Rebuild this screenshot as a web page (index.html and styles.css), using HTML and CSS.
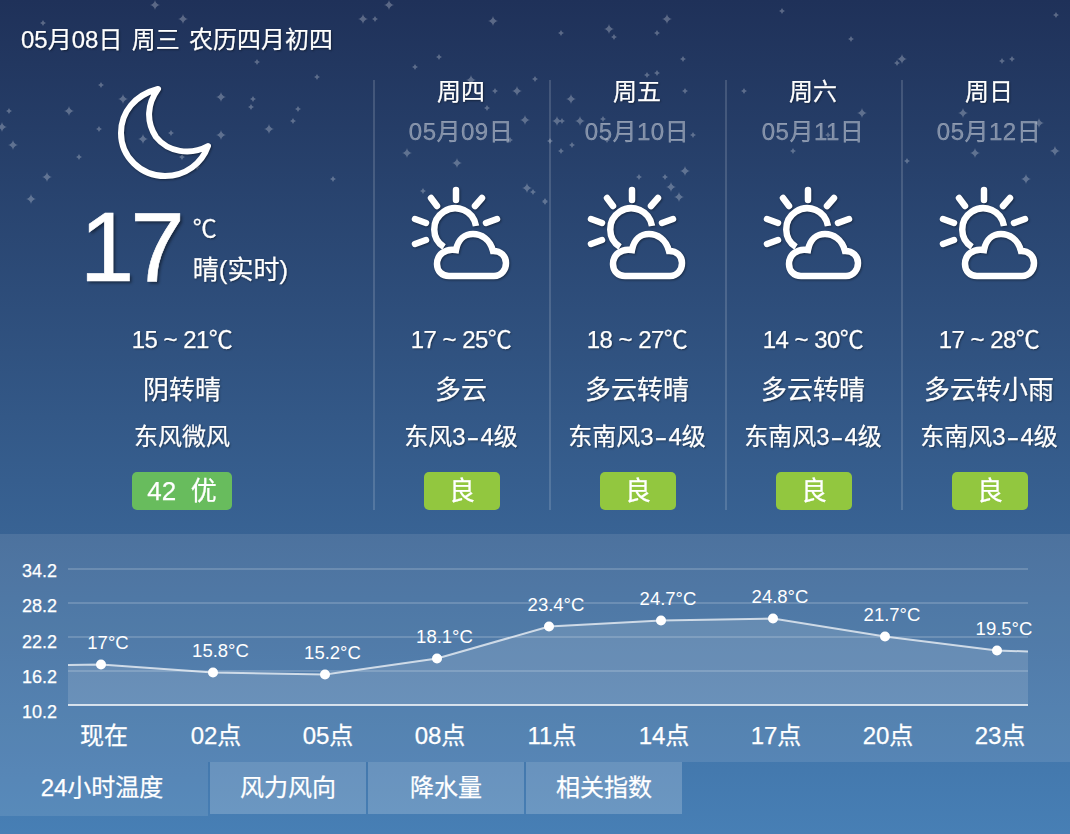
FILE: index.html
```html
<!DOCTYPE html>
<html lang="zh">
<head>
<meta charset="utf-8">
<title>天气</title>
<link rel="stylesheet" href="styles.css">
</head>
<body>
<svg class="defs" width="0" height="0" aria-hidden="true">
  <symbol id="pc" viewBox="0 0 100 100">
    <g fill="none" stroke="#fff" stroke-width="6.500" stroke-linecap="round">
      <path d="M45 5V15M20 13L26 21M71 13L64 21M4 34L15 38M86 34L75 38M4 59L15 55"/>
      <path d="M33 62A21 21 0 1 1 65 41" stroke-linecap="butt"/>
      <path d="M38 91H83C91 91 95 84 95 78 95 71 90 66 82 66 79 54 70 49 62 49 54 49 47 54 45 65 34 63 26 70 26 79 26 86 31 91 38 91Z"/>
    </g>
  </symbol>
</svg>
<div class="page">
  <svg class="stars" width="1070" height="210" aria-hidden="true">
    <defs>
      <path id="b" d="M0-5Q.8-.8 5 0Q.8.8 0 5Q-.8.8-5 0Q-.8-.8 0-5Z"/>
      <path id="t" d="M0-3Q.7-.7 3 0Q.7.7 0 3Q-.7.7-3 0Q-.7-.7 0-3Z"/>
    </defs>
    <g class="star-set">
      <use href="#b" x="155" y="5"/><use href="#b" x="183" y="19"/><use href="#t" x="43" y="23"/><use href="#t" x="257" y="62"/><use href="#t" x="317" y="77"/><use href="#t" x="101" y="85"/><use href="#b" x="123" y="99"/><use href="#b" x="221" y="97"/><use href="#t" x="253" y="99"/><use href="#t" x="251" y="107"/><use href="#t" x="298" y="109"/><use href="#t" x="293" y="121"/><use href="#b" x="269" y="129"/><use href="#b" x="69" y="111"/><use href="#t" x="9" y="111"/><use href="#b" x="2" y="127"/><use href="#t" x="99" y="129"/><use href="#b" x="13" y="145"/><use href="#t" x="79" y="157"/><use href="#b" x="47" y="177"/><use href="#b" x="31" y="199"/><use href="#b" x="143" y="139"/><use href="#t" x="171" y="133"/><use href="#b" x="221" y="135"/><use href="#t" x="333" y="179"/><use href="#t" x="182" y="157"/><use href="#t" x="197" y="167"/>
      <use href="#b" x="389" y="5"/><use href="#b" x="363" y="19"/><use href="#t" x="375" y="19"/><use href="#b" x="493" y="21"/><use href="#t" x="439" y="57"/><use href="#t" x="415" y="67"/><use href="#b" x="471" y="80"/><use href="#t" x="535" y="79"/><use href="#b" x="517" y="91"/><use href="#t" x="495" y="91"/><use href="#t" x="487" y="108"/><use href="#b" x="525" y="120"/><use href="#b" x="557" y="121"/><use href="#b" x="407" y="153"/><use href="#b" x="457" y="163"/><use href="#t" x="550" y="141"/><use href="#b" x="527" y="188"/><use href="#t" x="533" y="192"/><use href="#t" x="545" y="201"/><use href="#t" x="423" y="191"/><use href="#t" x="510" y="140"/>
      <use href="#b" x="667" y="19"/><use href="#b" x="609" y="29"/><use href="#t" x="614" y="37"/><use href="#t" x="561" y="33"/><use href="#t" x="657" y="33"/><use href="#t" x="782" y="11"/><use href="#t" x="1056" y="15"/><use href="#t" x="851" y="39"/><use href="#b" x="902" y="59"/><use href="#t" x="897" y="63"/><use href="#t" x="683" y="59"/><use href="#t" x="1012" y="59"/><use href="#t" x="1002" y="61"/><use href="#t" x="657" y="73"/><use href="#t" x="647" y="75"/><use href="#t" x="685" y="91"/><use href="#t" x="744" y="91"/><use href="#b" x="571" y="99"/><use href="#t" x="562" y="121"/><use href="#b" x="580" y="121"/><use href="#t" x="603" y="119"/><use href="#b" x="862" y="113"/><use href="#b" x="963" y="113"/><use href="#b" x="1039" y="123"/><use href="#t" x="693" y="135"/><use href="#t" x="607" y="140"/><use href="#t" x="572" y="145"/><use href="#t" x="561" y="151"/><use href="#t" x="793" y="151"/><use href="#b" x="975" y="153"/><use href="#b" x="1055" y="151"/><use href="#t" x="907" y="161"/><use href="#b" x="685" y="171"/><use href="#t" x="639" y="177"/><use href="#t" x="665" y="177"/><use href="#b" x="671" y="187"/><use href="#b" x="679" y="197"/><use href="#b" x="1026" y="179"/><use href="#t" x="828" y="135"/><use href="#t" x="545" y="202"/>
    </g>
  </svg>

  <header class="date">05月08日&nbsp;&nbsp;周三&nbsp;&nbsp;农历四月初四</header>

  <section class="forecast">
    <div class="today">
      <svg class="moon" width="100" height="100" viewBox="115 85 100 100">
        <path d="M158 89C135 95 121 112 121 133 121 157 141 176 165 176 186 176 202 163 208 146 190 156 168 152 156 137 146 122 147 104 158 89Z" fill="none" stroke="#fff" stroke-width="6" stroke-linejoin="round"/>
      </svg>
      <div class="now">
        <div class="big">17</div>
        <div class="now-side">
          <div class="unit">℃</div>
          <div class="real">晴(实时)</div>
        </div>
      </div>
      <div class="temp">15 ~ 21℃</div>
      <div class="cond">阴转晴</div>
      <div class="wind">东风微风</div>
      <div class="aqi aqi-good aqi-wide">42&nbsp;&nbsp;优</div>
    </div>

    <div class="day">
      <div class="week">周四</div>
      <div class="md">05月09日</div>
      <svg class="wx" width="100" height="100"><use href="#pc"/></svg>
      <div class="temp">17 ~ 25℃</div>
      <div class="cond">多云</div>
      <div class="wind">东风3<span class="dash">-</span>4级</div>
      <div class="aqi aqi-day">良</div>
    </div>
    <div class="day">
      <div class="week">周五</div>
      <div class="md">05月10日</div>
      <svg class="wx" width="100" height="100"><use href="#pc"/></svg>
      <div class="temp">18 ~ 27℃</div>
      <div class="cond">多云转晴</div>
      <div class="wind">东南风3<span class="dash">-</span>4级</div>
      <div class="aqi aqi-day">良</div>
    </div>
    <div class="day">
      <div class="week">周六</div>
      <div class="md">05月11日</div>
      <svg class="wx" width="100" height="100"><use href="#pc"/></svg>
      <div class="temp">14 ~ 30℃</div>
      <div class="cond">多云转晴</div>
      <div class="wind">东南风3<span class="dash">-</span>4级</div>
      <div class="aqi aqi-day">良</div>
    </div>
    <div class="day">
      <div class="week">周日</div>
      <div class="md">05月12日</div>
      <svg class="wx" width="100" height="100"><use href="#pc"/></svg>
      <div class="temp">17 ~ 28℃</div>
      <div class="cond">多云转小雨</div>
      <div class="wind">东南风3<span class="dash">-</span>4级</div>
      <div class="aqi aqi-day">良</div>
    </div>
  </section>

  <section class="chart">
    <div class="yaxis"><span>34.2</span><span>28.2</span><span>22.2</span><span>16.2</span><span>10.2</span></div>
    <svg class="plot" width="1070" height="228" viewBox="0 0 1070 228">
      <path d="M68 131L101 130.500L213 138.500L325 140.500L437 124.500L549 92.500L661 86.500L773 84.500L885 102.500L997 116.500L1028 117.500V171H68Z" fill="#fff" fill-opacity=".13"/>
      <path d="M68 35H1028M68 69H1028M68 103H1028M68 137H1028" stroke="#fff" stroke-opacity=".17" stroke-width="2"/>
      <path d="M68 171H1028" stroke="#fff" stroke-opacity=".75" stroke-width="2"/>
      <path d="M68 131L101 130.500L213 138.500L325 140.500L437 124.500L549 92.500L661 86.500L773 84.500L885 102.500L997 116.500L1028 117.500" fill="none" stroke="#fff" stroke-opacity=".7" stroke-width="2"/>
      <g fill="#fff">
        <circle cx="101" cy="130.500" r="5"/><circle cx="213" cy="138.500" r="5"/><circle cx="325" cy="140.500" r="5"/><circle cx="437" cy="124.500" r="5"/><circle cx="549" cy="92.500" r="5"/><circle cx="661" cy="86.500" r="5"/><circle cx="773" cy="84.500" r="5"/><circle cx="885" cy="102.500" r="5"/><circle cx="997" cy="116.500" r="5"/>
      </g>
      <g class="vals" text-anchor="middle">
        <text x="108" y="115">17°C</text><text x="220.500" y="123">15.8°C</text><text x="332.500" y="125">15.2°C</text><text x="444.500" y="109">18.1°C</text><text x="556" y="77">23.4°C</text><text x="668" y="71">24.7°C</text><text x="780" y="69">24.8°C</text><text x="892" y="87">21.7°C</text><text x="1004" y="101">19.5°C</text>
      </g>
    </svg>
    <div class="hours"><span>现在</span><span>02点</span><span>05点</span><span>08点</span><span>11点</span><span>14点</span><span>17点</span><span>20点</span><span>23点</span></div>
  </section>

  <nav class="tabs">
    <div class="tab tab-on">24小时温度</div>
    <div class="tab">风力风向</div>
    <div class="tab">降水量</div>
    <div class="tab">相关指数</div>
  </nav>
</div>
</body>
</html>
```
FILE: styles.css
```css
* { box-sizing: border-box; }
html, body { margin: 0; padding: 0; }
body {
  font-family: "Liberation Sans", "Noto Sans CJK SC", sans-serif;
  color: #fff;
  overflow: hidden;
  -webkit-text-stroke: .25px currentColor;
}
.page {
  position: relative;
  width: 1070px;
  height: 834px;
  overflow: hidden;
  background: linear-gradient(180deg, #1f3159 0%, #477fb5 100%);
}
.stars { position: absolute; left: 0; top: 0; }
.star-set { fill: #fff; opacity: .27; filter: blur(.5px); }
.defs { position: absolute; }
.date {
  position: relative;
  height: 80px;
  padding: 26px 0 0 21px;
  font-size: 24px;
  line-height: 28px;
  white-space: nowrap;
  word-spacing: -2px;
  text-shadow: 1px 1px 2px rgba(0,0,0,.45);
}
.forecast {
  position: relative;
  display: flex;
  height: 430px;
}
.today {
  flex: none;
  width: 373px;
  padding-right: 9px;
  display: flex;
  flex-direction: column;
  align-items: center;
}
.day {
  flex: none;
  width: 176px;
  padding-right: 2px;
  border-left: 2px solid rgba(255,255,255,.15);
  display: flex;
  flex-direction: column;
  align-items: center;
}
.moon {
  display: block;
  margin: 5px 0 0 -34px;
  height: 100px;
  filter: drop-shadow(1px 1px 1px rgba(0,0,0,.4));
}
.now {
  display: flex;
  height: 140px;
  margin-left: 4px;
}
.big {
  font-size: 98px;
  line-height: 100px;
  margin-top: 12px;
  letter-spacing: -4px;
  -webkit-text-stroke: .6px #fff;
  text-shadow: 2px 2px 3px rgba(0,0,0,.45);
}
.now-side { margin-left: 12px; padding-top: 29px; }
.unit { font-size: 24px; line-height: 30px; text-shadow: 1px 1px 2px rgba(0,0,0,.45); }
.real { font-size: 26px; line-height: 30px; margin-top: 11px; text-shadow: 1px 1px 2px rgba(0,0,0,.45); }
.week {
  font-size: 24px;
  line-height: 28px;
  margin-top: -2px;
  text-shadow: 1px 1px 2px rgba(0,0,0,.45);
}
.md {
  font-size: 24px;
  line-height: 30px;
  margin-top: 11px;
  letter-spacing: .5px;
  color: rgba(255,255,255,.42);
}
.wx {
  display: block;
  margin-top: 38px;
  height: 100px;
  filter: drop-shadow(1px 1px 1px rgba(0,0,0,.4));
}
.temp, .cond, .wind {
  text-shadow: 1px 1px 2px rgba(0,0,0,.45);
  white-space: nowrap;
  text-align: center;
}
.temp { font-size: 24px; line-height: 30px; margin-top: 40px; letter-spacing: -.5px; }
.today .temp { margin-top: 0; }
.cond { font-size: 26px; line-height: 30px; margin-top: 20px; }
.wind { font-size: 24px; line-height: 30px; margin-top: 17px; }
.dash { display: inline-block; transform: scaleX(1.6); margin: 0 3.500px; }
.aqi {
  width: 76px;
  height: 38px;
  margin-top: 20px;
  background: #92c73f;
  border-radius: 5px;
  font-size: 26px;
  line-height: 38px;
  text-align: center;
}
.aqi-day { margin-left: 2px; }
.aqi-good { background: #68bc5d; }
.aqi-wide { width: 100px; }
.chart {
  position: relative;
  height: 228px;
  margin-top: 24px;
  background: rgba(255,255,255,.1);
}
.plot { position: absolute; left: 0; top: 0; display: block; }
.vals text {
  font-family: "Liberation Sans", sans-serif;
  font-size: 18.500px;
  fill: #fff;
}
.yaxis {
  position: absolute;
  left: 22px;
  top: 25px;
  display: flex;
  flex-direction: column;
  gap: 11.250px;
  font-size: 18px;
  line-height: 24px;
}
.hours {
  position: absolute;
  left: 48px;
  top: 185px;
  display: flex;
  font-size: 24px;
  line-height: 34px;
}
.hours span { width: 112px; text-align: center; }
.tabs {
  position: relative;
  display: flex;
  gap: 2px;
  height: 54px;
}
.tab {
  width: 156px;
  height: 52px;
  background: rgba(255,255,255,.2);
  font-size: 24px;
  line-height: 52px;
  text-align: center;
}
.tab-on {
  width: 208px;
  height: 54px;
  padding-right: 4px;
  background: rgba(255,255,255,.1);
}
```
